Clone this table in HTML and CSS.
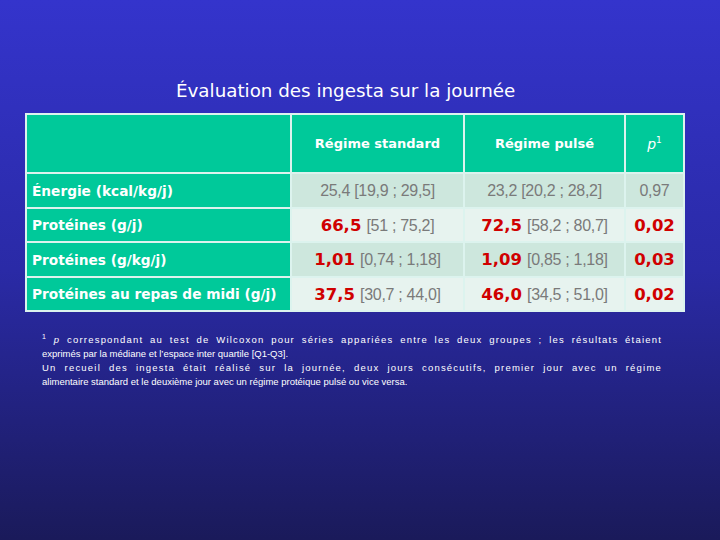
FILE: index.html
```html
<!DOCTYPE html>
<html lang="fr">
<head>
    <meta charset="UTF-8">
    <meta name="viewport" content="width=device-width, initial-scale=1.0">
    <title>Évaluation des ingesta</title>
    <link rel="stylesheet" href="styles.css">
</head>
<body>
    <div class="slide">
        <h1 class="title">Évaluation des ingesta sur la journée</h1>

        <table class="results">
            <tr class="head">
                <th class="label"></th>
                <th class="c-std">Régime standard</th>
                <th class="c-pul">Régime pulsé</th>
                <th class="c-p"><i>p</i><sup>1</sup></th>
            </tr>
            <tr class="dark">
                <td class="label">Énergie (kcal/kg/j)</td>
                <td><span class="range">25,4 [19,9 ; 29,5]</span></td>
                <td><span class="range">23,2 [20,2 ; 28,2]</span></td>
                <td><span class="range">0,97</span></td>
            </tr>
            <tr class="light">
                <td class="label">Protéines (g/j)</td>
                <td><span class="hit">66,5</span> <span class="range">[51 ; 75,2]</span></td>
                <td><span class="hit">72,5</span> <span class="range">[58,2 ; 80,7]</span></td>
                <td><span class="hit">0,02</span></td>
            </tr>
            <tr class="dark">
                <td class="label">Protéines (g/kg/j)</td>
                <td><span class="hit">1,01</span> <span class="range">[0,74 ; 1,18]</span></td>
                <td><span class="hit">1,09</span> <span class="range">[0,85 ; 1,18]</span></td>
                <td><span class="hit">0,03</span></td>
            </tr>
            <tr class="light">
                <td class="label">Protéines au repas de midi (g/j)</td>
                <td><span class="hit">37,5</span> <span class="range">[30,7 ; 44,0]</span></td>
                <td><span class="hit">46,0</span> <span class="range">[34,5 ; 51,0]</span></td>
                <td><span class="hit">0,02</span></td>
            </tr>
        </table>

        <div class="notes">
            <p class="line full"><sup>1</sup> <i>p</i> correspondant au test de Wilcoxon pour séries appariées entre les deux groupes ; les résultats étaient</p>
            <p class="line">exprimés par la médiane et l’espace inter quartile [Q1-Q3].</p>
            <p class="line full">Un recueil des ingesta était réalisé sur la journée, deux jours consécutifs, premier jour avec un régime</p>
            <p class="line">alimentaire standard et le deuxième jour avec un régime protéique pulsé ou vice versa.</p>
        </div>
    </div>
</body>
</html>
```

FILE: styles.css
```css
body {
    margin: 0;
    width: 720px;
    height: 540px;
    overflow: hidden;
    background: linear-gradient(to bottom, #3434cc 0%, #2a2aa6 50%, #1a1a5a 100%);
    color: #fff;
    font-family: "DejaVu Sans", sans-serif;
}

.slide {
    padding: 80px 0 0 25px;
}

.title {
    margin: 0 0 11px 151px;
    font-size: 18.3px;
    font-weight: normal;
    line-height: 22px;
}

/* tableau des résultats */
.results {
    width: 660px;
    border-spacing: 2px;
    background-color: #dcf3ee;
    table-layout: fixed;
}

.results th,
.results td {
    padding: 0;
    text-align: center;
    vertical-align: middle;
    white-space: nowrap;
}

.results .label {
    width: 258px;
    padding-left: 5px;
    text-align: left;
    background-color: #00c99a;
    font-size: 13.7px;
    font-weight: bold;
    color: #fff;
}

.c-std { width: 171px; }
.c-pul { width: 159px; }
.c-p { width: 57px; }

.head th {
    height: 57px;
    background-color: #00c99a;
    font-size: 13px;
    font-weight: bold;
}

.head .c-p {
    font-size: 14px;
    font-weight: normal;
}

.head sup {
    font-size: 9px;
}

.dark td { background-color: #cde7dd; height: 33px; }
.light td { background-color: #e7f3ef; height: 32px; }

.range {
    font-family: "Liberation Sans", Arial, sans-serif;
    font-size: 16px;
    letter-spacing: -0.3px;
    color: #7a7a7a;
}

.hit {
    font-size: 16.5px;
    font-weight: bold;
    color: #d00000;
}

/* notes de bas de page */
.notes {
    margin: 21px 0 0 17px;
    width: 620px;
    font-family: "Liberation Sans", Arial, sans-serif;
    font-size: 9.5px;
    line-height: 14px;
}

.line {
    margin: 0;
    white-space: nowrap;
}

.line.full {
    text-align: justify;
    text-align-last: justify;
    letter-spacing: 1.2px;
    white-space: normal;
}

.notes sup {
    font-size: 7px;
    line-height: 0;
}
```
